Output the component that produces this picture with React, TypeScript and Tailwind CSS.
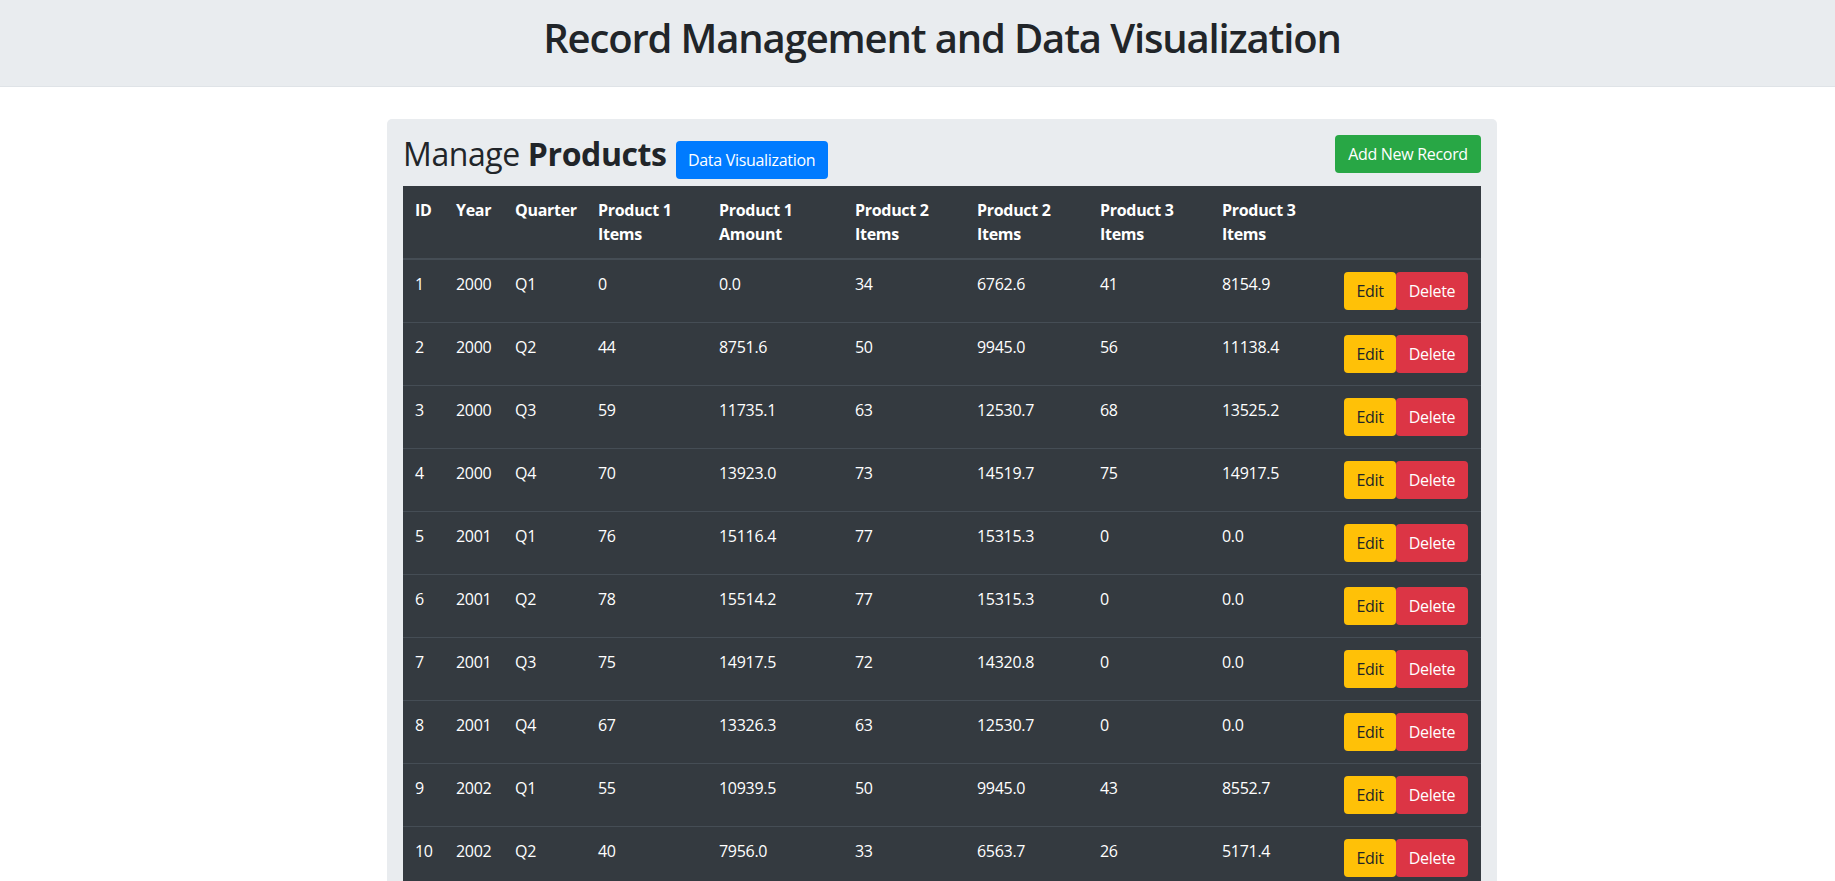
const rows = [
    [1, 2000, 'Q1', 0, '0.0', 34, '6762.6', 41, '8154.9'],
    [2, 2000, 'Q2', 44, '8751.6', 50, '9945.0', 56, '11138.4'],
    [3, 2000, 'Q3', 59, '11735.1', 63, '12530.7', 68, '13525.2'],
    [4, 2000, 'Q4', 70, '13923.0', 73, '14519.7', 75, '14917.5'],
    [5, 2001, 'Q1', 76, '15116.4', 77, '15315.3', 0, '0.0'],
    [6, 2001, 'Q2', 78, '15514.2', 77, '15315.3', 0, '0.0'],
    [7, 2001, 'Q3', 75, '14917.5', 72, '14320.8', 0, '0.0'],
    [8, 2001, 'Q4', 67, '13326.3', 63, '12530.7', 0, '0.0'],
    [9, 2002, 'Q1', 55, '10939.5', 50, '9945.0', 43, '8552.7'],
    [10, 2002, 'Q2', 40, '7956.0', 33, '6563.7', 26, '5171.4'],
];

const columns = [
    { label: ['ID'], width: 'w-[41px]' },
    { label: ['Year'], width: 'w-[59px]' },
    { label: ['Quarter'], width: 'w-[83px]' },
    { label: ['Product 1', 'Items'], width: 'w-[121px]' },
    { label: ['Product 1', 'Amount'], width: 'w-[136px]' },
    { label: ['Product 2', 'Items'], width: 'w-[122px]' },
    { label: ['Product 2', 'Items'], width: 'w-[123px]' },
    { label: ['Product 3', 'Items'], width: 'w-[122px]' },
    { label: ['Product 3', 'Items'], width: 'w-[122px]' },
];

export default function App() {
    return (
        <div className="min-h-screen bg-white text-[#212529] font-['Segoe_UI','Open_Sans',sans-serif]">
            {/* Page header */}
            <header className="h-[87px] bg-[#e9ecef] border-b border-[#dfe3e7] pl-[49px] pt-[14px]">
                <h1 className="text-center text-[40px] leading-[48px] font-semibold tracking-[-1.15px]">
                    Record Management and Data Visualization
                </h1>
            </header>

            <div className="pl-[49px] pt-[32px]">
                <div className="mx-auto w-[1110px] bg-[#e9ecef] rounded-[5px] px-[16px] pt-[16px]">
                    {/* Title row */}
                    <div className="flex items-start justify-between h-[51px]">
                        <div className="flex items-baseline">
                            <h2 className="text-[32px] leading-[38px] font-medium tracking-[-0.4px]">
                                Manage <b className="font-bold">Products</b>
                            </h2>
                            <button className="ml-[9px] w-[152px] h-[38px] rounded-[4px] bg-[#007bff] text-white text-[16px] leading-[24px] tracking-[-0.3px]">
                                Data Visualization
                            </button>
                        </div>
                        <button className="w-[146px] h-[38px] rounded-[4px] bg-[#28a745] text-white text-[16px] leading-[24px] tracking-[-0.3px]">
                            Add New Record
                        </button>
                    </div>

                    {/* Table */}
                    <table className="w-full table-fixed border-collapse bg-[#343a40] text-white text-[16px] leading-[24px]">
                        <thead>
                            <tr>
                                {columns.map((col, i) => (
                                    <th
                                        key={i}
                                        className={`${col.width} p-[12px] text-left align-top font-bold border-b-2 border-[#454d55] tracking-[-0.3px]`}
                                    >
                                        {col.label.map((line, j) => (
                                            <div key={j} className="whitespace-nowrap">{line}</div>
                                        ))}
                                    </th>
                                ))}
                                <th className="p-[12px] border-b-2 border-[#454d55]" />
                            </tr>
                        </thead>
                        <tbody>
                            {rows.map((row) => (
                                <tr key={row[0]} className="border-t border-[#454d55]">
                                    {row.map((cell, i) => (
                                        <td key={i} className="p-[12px] align-top tracking-[-0.3px]">
                                            {cell}
                                        </td>
                                    ))}
                                    <td className="p-[12px] align-top">
                                        <div className="flex">
                                            <button className="w-[52px] h-[38px] rounded-[4px] bg-[#ffc107] text-[#212529] tracking-[-0.3px]">
                                                Edit
                                            </button>
                                            <button className="w-[72px] h-[38px] rounded-[4px] bg-[#dc3545] text-white tracking-[-0.3px]">
                                                Delete
                                            </button>
                                        </div>
                                    </td>
                                </tr>
                            ))}
                        </tbody>
                    </table>
                </div>
            </div>
        </div>
    );
}
